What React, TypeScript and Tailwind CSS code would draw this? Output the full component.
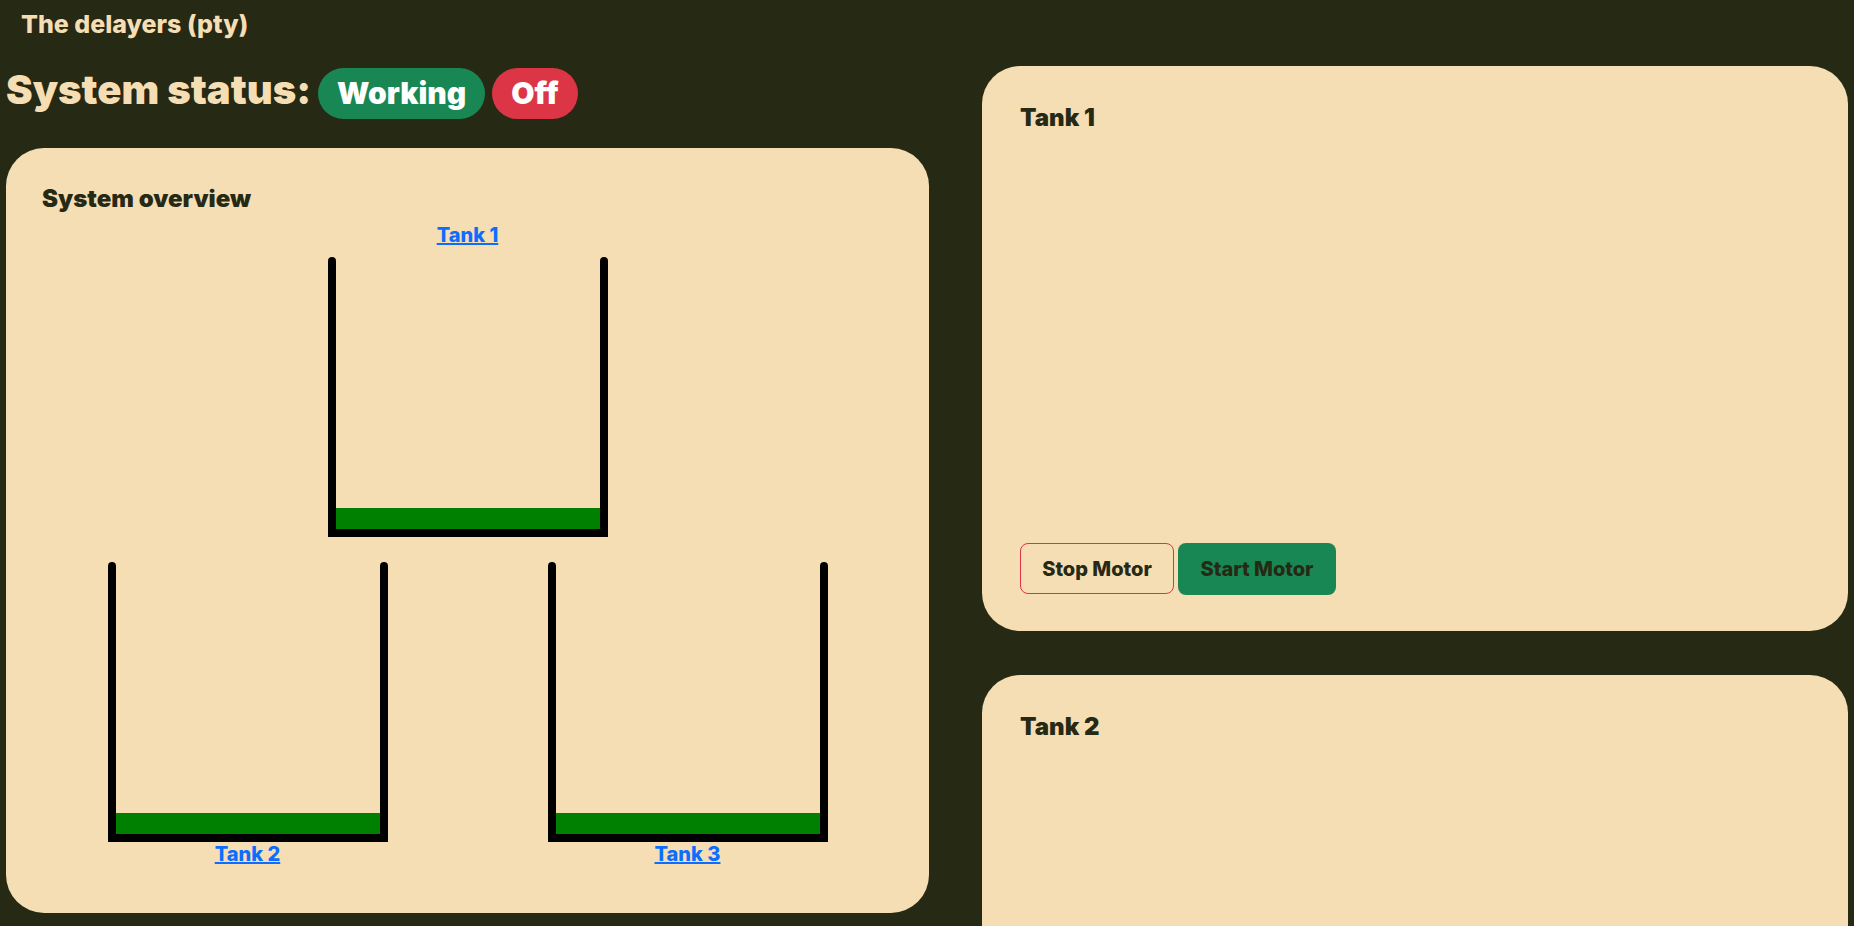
import React from "react";

// tank outline drawn as svg: two walls and a base, water level as a green rect
function Tank({ level = 21 }: { level?: number }) {
  return (
    <svg width="280" height="280" viewBox="0 0 280 280" className="block">
      <rect x="8" y={272 - level} width="264" height={level} fill="#008000" />
      <path
        d="M4 4 V276 H276 V4"
        fill="none"
        stroke="#000"
        strokeWidth="8"
        strokeLinecap="round"
        strokeLinejoin="miter"
      />
    </svg>
  );
}

function TankLink({ label }: { label: string }) {
  return (
    <a
      href="#"
      className="block text-center text-[20px] leading-[24px] font-extrabold text-[#0d6efd] underline"
    >
      {label}
    </a>
  );
}

function TankCard({ title }: { title: string }) {
  return (
    <div className="h-[565px] shrink-0 rounded-[38px] bg-[#f5deb3] pt-[37px] pl-[38px] pb-[36px] flex flex-col justify-between">
      <h2 className="text-[24px] leading-[29px] font-black text-[#262914]">
        {title}
      </h2>
      <div className="flex gap-[4px]">
        <button className="h-[51px] w-[154px] rounded-[8px] border border-[#dc3545] text-[20px] font-extrabold text-[#262914]">
          Stop Motor
        </button>
        <button className="h-[52px] w-[158px] rounded-[8px] bg-[#198754] text-[20px] font-extrabold text-[#262914]">
          Start Motor
        </button>
      </div>
    </div>
  );
}

export default function App() {
  return (
    <div className="h-[926px] overflow-hidden bg-[#262914] px-[6px] font-['Inter',sans-serif]">
      <div className="h-[66px] pl-[15px] pt-[9px] text-[25px] leading-[30px] font-extrabold text-[#f5deb3]">
        The delayers (pty)
      </div>

      <div className="flex gap-[53px]">
        <div className="w-[923px] shrink-0">
          <h1 className="flex items-baseline gap-[7px] text-[40px] leading-[48px] font-black text-[#f5deb3]">
            <span>System status:</span>
            <span className="rounded-full bg-[#198754] px-[19px] py-[10.5px] text-[30px] leading-[30px] font-black text-white">
              Working
            </span>
            <span className="rounded-full bg-[#dc3545] px-[19px] py-[10.5px] text-[30px] leading-[30px] font-black text-white">
              Off
            </span>
          </h1>

          <div className="mt-[29px] h-[765px] rounded-[38px] bg-[#f5deb3] px-9 pt-9">
            <h2 className="text-[24px] leading-[29px] font-black text-[#262914]">
              System overview
            </h2>
            <div className="mt-[10px] flex flex-col items-center">
              <TankLink label="Tank 1" />
              <div className="mt-[10px]">
                <Tank />
              </div>
            </div>
            <div className="mt-[25px] flex justify-center gap-[160px]">
              <div className="flex flex-col">
                <Tank />
                <TankLink label="Tank 2" />
              </div>
              <div className="flex flex-col">
                <Tank />
                <TankLink label="Tank 3" />
              </div>
            </div>
          </div>
        </div>

        <div className="flex flex-1 flex-col gap-[44px]">
          <TankCard title="Tank 1" />
          <TankCard title="Tank 2" />
        </div>
      </div>
    </div>
  );
}
